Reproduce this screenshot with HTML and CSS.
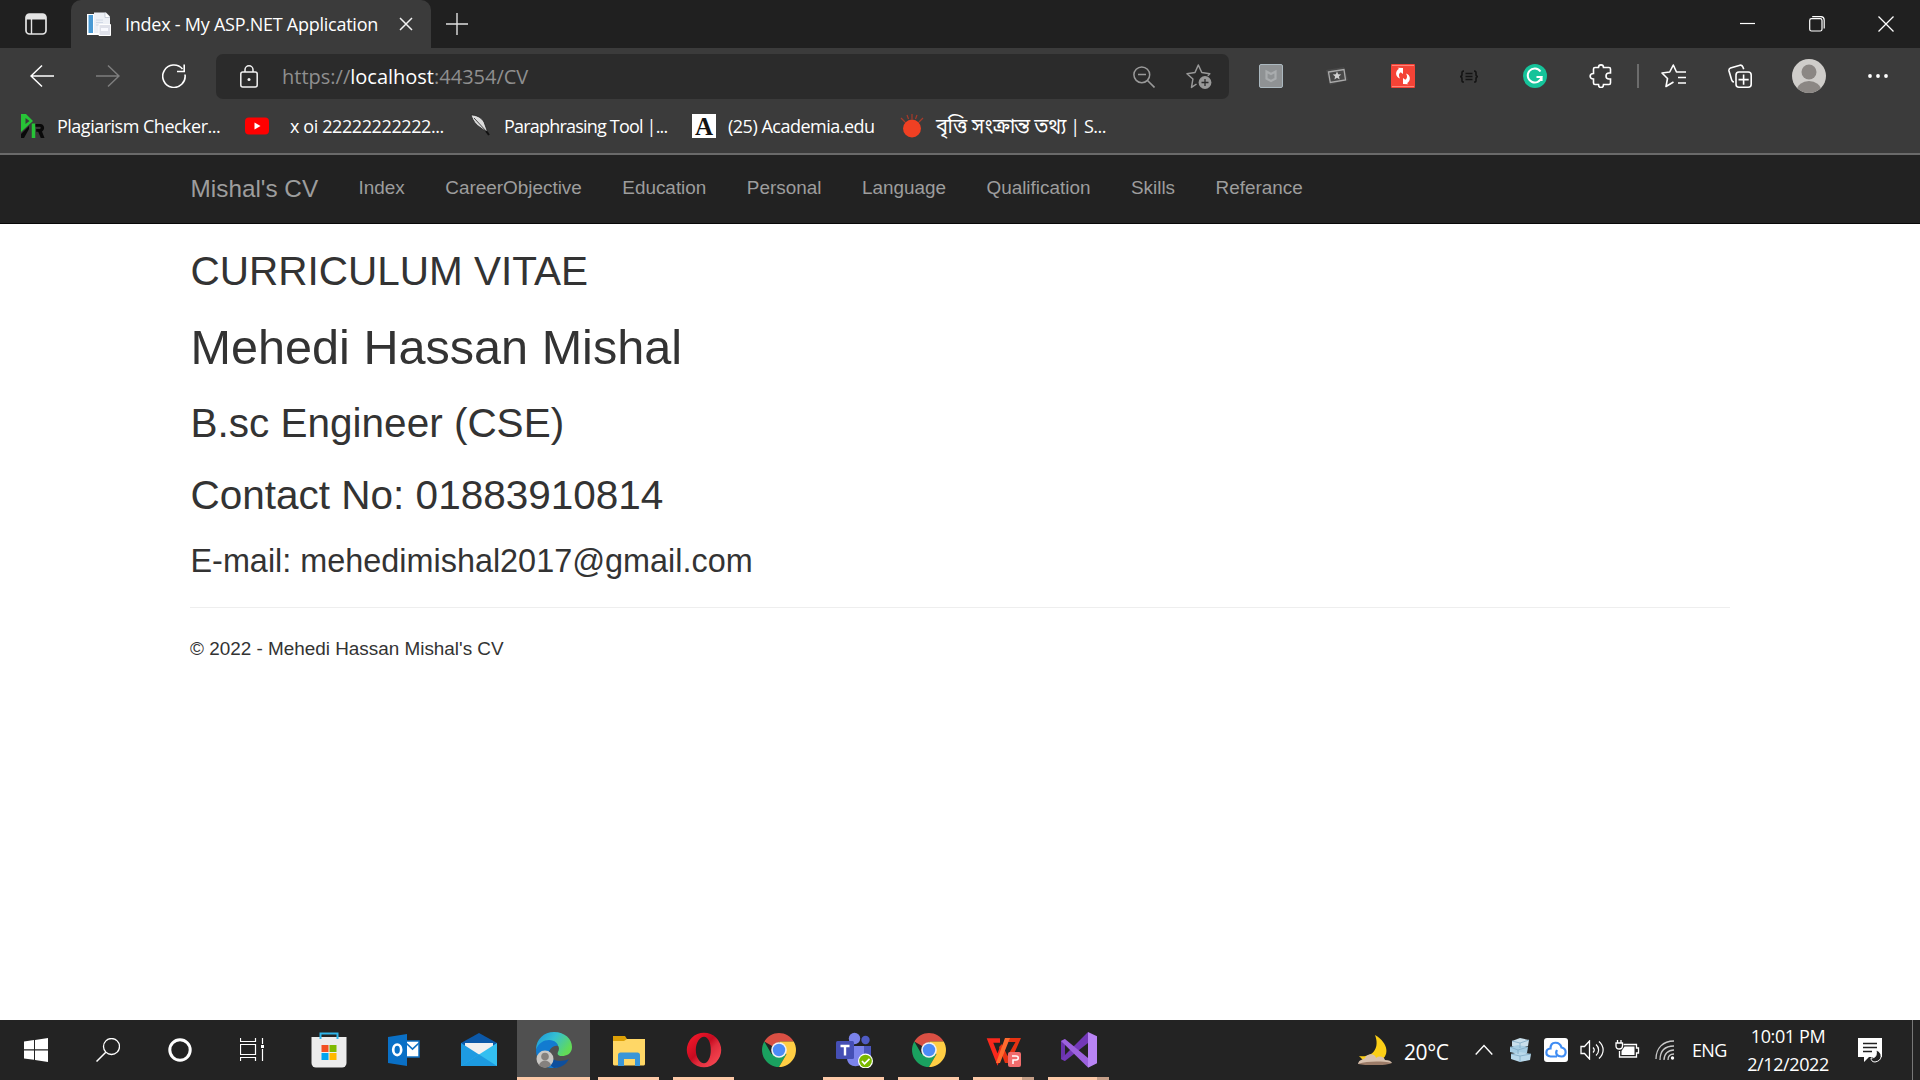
FILE: index.html
```html
<!DOCTYPE html>
<html lang="en">
<head>
<meta charset="utf-8">
<title>Index - My ASP.NET Application</title>
<link rel="stylesheet" href="styles.css">
</head>
<body>
<svg class="defs" width="0" height="0">
  <symbol id="chrome" viewBox="0 0 34 34">
    <path d="M17 17 2.3 8.5A17 17 0 0 1 31.7 8.5H17Z" fill="#d94f43"/>
    <path d="M2.3 8.5A17 17 0 0 0 17 34l7.4-12.8L17 17 9.6 21.2Z" fill="#1aa15f"/>
    <path d="M31.7 8.5A17 17 0 0 1 17 34l7.4-12.8L17 8.5Z" fill="#ffce44"/>
    <circle cx="17" cy="17" r="7.8" fill="#f1f1f1"/><circle cx="17" cy="17" r="6.2" fill="#4c8bf5"/>
  </symbol>
</svg>

<header class="browser">
  <div class="tabstrip">
    <svg class="tab-actions" width="22" height="22" viewBox="0 0 22 22"><rect x="1" y="1" width="20" height="20" rx="3.5" fill="none" stroke="#e4e4e4" stroke-width="1.7"/><path d="M1 6V4a3 3 0 0 1 3-3h14a3 3 0 0 1 3 3v2.5H1Z" fill="#e4e4e4"/><path d="M6.5 6v15" stroke="#e4e4e4" stroke-width="1.4"/></svg>
    <div class="tab">
      <svg width="24" height="24" viewBox="0 0 24 24"><path d="M0 2h13v21H0Z" fill="#fff"/><path d="M1.5 3h4.500v18h-4.500Z" fill="#4a9ad4"/><path d="M7 .5h12l4 4V21H7Z" fill="#edf0f6"/><path d="M18 .5v5h5" fill="#fff" stroke="#aab2c2" stroke-width=".6"/><path d="M9 8h7M9 10.500h7M9 13h3" stroke="#c9d3e2" stroke-width=".8"/><path d="M12 12.500h11.500V23.500H12Z" fill="#dfe1ea" stroke="#fff"/><path d="M14 16h7v3h-7Z" fill="#f9faff"/></svg>
      <span class="tab-title">Index - My ASP.NET Application</span>
      <svg class="tab-close" width="14" height="14" viewBox="0 0 14 14"><path d="m1 1 12 12M13 1 1 13" stroke="#f2f2f2" stroke-width="1.5"/></svg>
    </div>
    <svg class="tab-new" width="22" height="22" viewBox="0 0 22 22"><path d="M0 11h22M11 0v22" stroke="#e0e0e0" stroke-width="1.4"/></svg>
    <div class="window-controls">
      <svg width="16" height="16" viewBox="0 0 16 16"><path d="M0 7.500h15" stroke="#fff" stroke-width="1.2"/></svg>
      <svg width="16" height="16" viewBox="0 0 16 16"><rect x=".7" y="2.7" width="12.3" height="12.3" rx="1.8" fill="none" stroke="#fff" stroke-width="1.2"/><path d="M3.2.7H12a3.3 3.3 0 0 1 3.2 3.2v8.6" fill="none" stroke="#fff" stroke-width="1.2"/></svg>
      <svg width="16" height="16" viewBox="0 0 16 16"><path d="m.5.5 15 15M15.500.5l-15 15" stroke="#fff" stroke-width="1.3"/></svg>
    </div>
  </div>

  <div class="toolbar">
    <div class="nav-buttons">
      <svg width="24" height="24" viewBox="0 0 24 24"><path d="M24 12H1M12 1.500 1 12l11 10.500" fill="none" stroke="#fff" stroke-width="1.5"/></svg>
      <svg width="24" height="24" viewBox="0 0 24 24"><path d="M0 12h23M12 1.500 23 12 12 22.500" fill="none" stroke="#7e7e7e" stroke-width="1.5"/></svg>
      <svg width="24" height="24" viewBox="0 0 24 24"><path d="M23 10.500A11.200 11.200 0 1 1 20.500 5M22.200.5v7H15" fill="none" stroke="#fff" stroke-width="1.6"/></svg>
    </div>
    <div class="address">
      <svg class="lock" width="18" height="23" viewBox="0 0 18 23"><rect x=".8" y="7" width="16.400" height="15" rx="2" fill="none" stroke="#f2f2f2" stroke-width="1.5"/><path d="M5 7V4.800a4 4 0 0 1 8 0V7" fill="none" stroke="#f2f2f2" stroke-width="1.5"/><circle cx="9" cy="14.500" r="1.500" fill="#f2f2f2"/></svg>
      <span class="url">https://<b>localhost</b>:44354/CV</span>
      <svg class="zoom-out" width="22" height="22" viewBox="0 0 22 22"><circle cx="8.800" cy="8.800" r="7.900" fill="none" stroke="#999" stroke-width="1.500"/><path d="M5 8.500h8M14.500 14.500l7 7" stroke="#999" stroke-width="1.600"/></svg>
      <svg width="26" height="26" viewBox="0 0 26 26"><path d="m10.500 20-5 3.400L6.900 15 1 9.700l8-1.200L12.300 1l3.500 7.500 8 1.200-2 2" fill="none" stroke="#999" stroke-width="1.500" stroke-linejoin="round"/><circle cx="19" cy="18.500" r="6.400" fill="#999"/><path d="M15.500 18.500h7M19 15v7" stroke="#2b2b2b" stroke-width="1.300"/></svg>
    </div>
    <div class="extensions">
      <svg width="24" height="24" viewBox="0 0 24 24"><rect x=".5" y=".5" width="23" height="23" rx="1.500" fill="#8f9294" stroke="#abb8bf"/><path d="M7.500 7.500 12 10l4.500-2.500v7.200L12 17l-4.500-2.300Z" fill="none" stroke="#a9acae" stroke-width="2.200"/></svg>
      <svg width="24" height="24" viewBox="0 0 24 24"><path d="m1 6 18-3 4 13-18 5Z" fill="#484848"/><path d="m3.500 8 15.500-2.500 1.500 10.500L5.300 18.500Z" fill="none" stroke="#aaa" stroke-width="1.300"/><path d="m12 7.500 1.200 2.800 3 .2-2.300 2 .8 3-2.700-1.700-2.600 1.700.7-3-2.300-2 3-.2Z" fill="#d0d0d0"/></svg>
      <svg width="24" height="24" viewBox="0 0 24 24"><rect width="24" height="24" rx="1" fill="#f44336"/><path d="M1 1.500h22M1 22.500h22" stroke="#ff8378"/><path d="M12 4v6L9.700 8.300C7.500 9.500 7.500 12 9 14.500 4 13 4 7 8 4.800L6.500 3.700ZM12 20v-6l2.300 1.700c2.200-1.200 2.200-3.700.7-6.200 5 1.500 5 7.500 1 9.700l1.500 1.100Z" fill="#fff"/></svg>
      <svg width="24" height="24" viewBox="0 0 24 24"><path d="M7 7C4.500 7 5 9 5 10.500S4.500 12.500 3 12.500c1.500 0 2 .5 2 2.500S4.500 18 7 18M17 7c2.500 0 2 2 2 3.500s.5 2 2 2c-1.500 0-2 .5-2 2.500s.5 3-2 3M8.500 9.500h7M8.500 12.500h7M8.500 15.500h7" fill="none" stroke="#141414" stroke-width="1.600"/></svg>
      <svg width="24" height="24" viewBox="0 0 24 24"><circle cx="12" cy="12" r="12" fill="#15c39a"/><path d="M17.500 7.500A7 7 0 1 0 18.600 13H13.500M18.600 13v4" fill="none" stroke="#fff" stroke-width="2"/></svg>
      <svg width="24" height="24" viewBox="0 0 24 24"><path d="M6 3.500h3.500C9.500 0 14.500 0 14.500 3.500H20c1 0 1.500.5 1.500 1.500v4h-1.500c-4 0-4 6 0 6h1.500v4c0 1-.5 1.500-1.500 1.500h-5.500c0 4-5 4-5 0H6c-1 0-1.500-.5-1.500-1.500v-4C0 15 0 9.500 4.500 9.500V5c0-1 .5-1.500 1.500-1.500Z" fill="none" stroke="#fff" stroke-width="1.600"/></svg>
    </div>
    <span class="divider"></span>
    <div class="browser-actions">
      <svg width="26" height="24" viewBox="0 0 26 24"><path d="m12.500 18-7.500 4.500 1.500-8L1 9l7.700-1L12.300 1l3.200 7H25M17 13.500h8M17 19h8" fill="none" stroke="#fff" stroke-width="1.600" stroke-linejoin="round"/></svg>
      <svg width="24" height="24" viewBox="0 0 24 24"><path d="M6 18c-1.500 0-2-1-2.300-2L1 7c-.3-1.500.3-2.500 1.500-3l9.500-2.800c1.500-.3 2.500.5 3 2l.7 2" fill="none" stroke="#fff" stroke-width="1.600"/><rect x="8" y="8" width="15.200" height="15.200" rx="3" fill="none" stroke="#fff" stroke-width="1.600"/><path d="M10.500 15.600h10.200M15.600 10.500v10.200" stroke="#fff" stroke-width="1.600"/></svg>
      <svg class="avatar" width="34" height="34" viewBox="0 0 34 34"><clipPath id="face"><circle cx="17" cy="17" r="17"/></clipPath><g clip-path="url(#face)"><path d="M0 0h34v34H0Z" fill="#cfcdca"/><circle cx="17" cy="13" r="7.500" fill="#8b8784"/><ellipse cx="17" cy="31" rx="12" ry="9" fill="#8b8784"/></g></svg>
      <svg width="20" height="6" viewBox="0 0 20 6"><circle cx="2" cy="3" r="1.900" fill="#fff"/><circle cx="10" cy="3" r="1.900" fill="#fff"/><circle cx="18" cy="3" r="1.900" fill="#fff"/></svg>
    </div>
  </div>

  <div class="bookmarks">
    <a class="bm bm-plagiarism"><svg width="24" height="24" viewBox="0 0 24 24"><path d="M0 0h5l7 7-12 11Zm4.500 4v6l4-3Z" fill="#27c437" fill-rule="evenodd"/><path d="M12.500 9.500V24" stroke="#27c437" stroke-width="3.500"/><path d="M14.500 10H20c4 1 4 6 1 7.500l2.500 6.500h-3.700l-2.600-6.300h-2V15H19c1-.5 1-2 0-2.300h-4.500ZM0 24v-4l8-8v3l-5 9Z" fill="#090909"/></svg><span>Plagiarism Checker...</span></a>
    <a class="bm bm-youtube"><svg width="24" height="24" viewBox="0 0 24 24"><rect y="3.500" width="24" height="17" rx="4" fill="#f00"/><path d="m9.500 8.500 6 3.500-6 3.500Z" fill="#fff"/></svg><span>x oi 22222222222...</span></a>
    <a class="bm bm-paraphrase"><svg width="24" height="24" viewBox="0 0 24 24"><path d="M1 1c5 0 10 2 13 7l4 11-7-5C6 11 3 7 1 1Z" fill="#ddd" stroke="#222" stroke-width=".8"/><path d="m4 4 13 14" stroke="#444"/><path d="m16 17 3 4" stroke="#111" stroke-width="2"/></svg><span>Paraphrasing Tool |...</span></a>
    <a class="bm bm-academia"><i class="academia">A</i><span>(25) Academia.edu</span></a>
    <a class="bm bm-bangla"><svg width="24" height="24" viewBox="0 0 24 24"><ellipse cx="12" cy="14.500" rx="9" ry="9" fill="#f04023"/><path d="M12 0v5M7 1l1.500 4M17 1l-1.500 4M1 4l4 4M23 4l-4 4" stroke="#a83a29" stroke-width="1.200"/></svg><span><span class="bangla" lang="bn">বৃত্তি সংক্রান্ত তথ্য</span> | S...</span></a>
  </div>
</header>

<main class="page">
  <nav class="navbar">
    <div class="container nav-row">
      <a class="brand">Mishal's CV</a>
      <a>Index</a><a>CareerObjective</a><a>Education</a><a>Personal</a><a>Language</a><a>Qualification</a><a>Skills</a><a>Referance</a>
    </div>
  </nav>
  <div class="container content">
    <h2>CURRICULUM VITAE</h2>
    <h1>Mehedi Hassan Mishal</h1>
    <h2>B.sc Engineer (CSE)</h2>
    <h2>Contact No: 01883910814</h2>
    <h3>E-mail: mehedimishal2017@gmail.com</h3>
    <hr>
    <footer>© 2022 - Mehedi Hassan Mishal's CV</footer>
  </div>
</main>

<div class="taskbar">
  <div class="system-icons">
    <svg width="24" height="24" viewBox="0 0 24 24"><path d="m0 3.500 10-1.400v9.200H0ZM11 2l13-2v11.300H11ZM0 12.500h10v9.300L0 20.400ZM11 12.500h13V24l-13-2Z" fill="#fff"/></svg>
    <svg width="24" height="24" viewBox="0 0 24 24"><circle cx="15.500" cy="8.500" r="8" fill="none" stroke="#fff" stroke-width="1.300"/><path d="M9.800 14.200.5 23.500" stroke="#fff" stroke-width="1.500"/></svg>
    <svg width="24" height="24" viewBox="0 0 24 24"><circle cx="12" cy="12" r="10.200" fill="none" stroke="#fff" stroke-width="3"/></svg>
    <svg width="24" height="24" viewBox="0 0 24 24"><path d="M.5 0v3.500h15V0M.5 6.500h15v10H.5ZM.5 23v-3.500h15V23M22.500 0v6M22.500 11v12" fill="none" stroke="#fff" stroke-width="1.200"/><path d="M21 7h3v3h-3Z" fill="#fff"/></svg>
  </div>
  <div class="apps">
    <span class="app"><svg width="36" height="36" viewBox="0 0 36 36"><path d="M.5 5h35v26a4.500 4.500 0 0 1-4.500 4.500H5A4.500 4.500 0 0 1 .5 31Z" fill="#ececec"/><path d="M9.500 7V1.500h17V7" fill="none" stroke="#2fb5ea" stroke-width="2"/><path d="M10.500 13h7v7h-7Z" fill="#f25022"/><path d="M18.500 13h7v7h-7Z" fill="#7fba00"/><path d="M10.500 21h7v7h-7Z" fill="#00a4ef"/><path d="M18.500 21h7v7h-7Z" fill="#ffb900"/></svg></span>
    <span class="app"><svg width="36" height="36" viewBox="0 0 36 36"><path d="M19 9h14v16H19Z" fill="#fff" stroke="#1072c4" stroke-width="1.500"/><path d="m20 11 6.500 6L33 11" fill="none" stroke="#1072c4" stroke-width="1.700"/><path d="m2 5 19-3v32L2 31Z" fill="#0a70c6"/><ellipse cx="11.200" cy="17.800" rx="4" ry="5.300" fill="none" stroke="#fff" stroke-width="2.700"/></svg></span>
    <span class="app"><svg width="36" height="36" viewBox="0 0 36 36"><path d="M0 11 18 1l18 10v6H0Z" fill="#0b58a8"/><path d="M4 11h28v14H4Z" fill="#f0f0f0"/><path d="M0 11 36 34H0Z" fill="#1e9be2"/><path d="M36 11v23H0Z" fill="#33bff0"/><path d="m18 22.500 18 11.500H0Z" fill="#1c9ae0"/></svg></span>
    <span class="app active wide"><svg width="36" height="36" viewBox="0 0 36 36"><defs><linearGradient id="eg" x2="1" y2=".5"><stop stop-color="#1793dc"/><stop offset=".5" stop-color="#35bfd2"/><stop offset="1" stop-color="#62db57"/></linearGradient></defs><path d="M0 18C0 7 8 0 18 0c11 0 18 7 18 15 0 7-6 9-10 9-4 0-5-2-4-4 3-5-1-10-8-10C7 10 2 14 0 18Z" fill="url(#eg)"/><path d="M0 18C2 11 8 8 13 8c6 0 9 4 9 6-5-1-9 3-9 8 0 6 4 12 9 14C8 38 0 29 0 18Z" fill="#127bd0"/><path d="M14 18c-2 9 7 14 19 9-3 6-9 9-15 9-6-3-9-12-4-18Z" fill="#0d4f9d"/><circle cx="9" cy="27" r="8.500" fill="#c9c7c4"/><circle cx="9" cy="24.500" r="3.800" fill="#85817e"/><path d="M3 33c2-6 10-6 12 0-3 3.500-9 3.500-12 0Z" fill="#85817e"/></svg></span>
    <span class="app open"><svg width="34" height="34" viewBox="0 0 34 34"><path d="M1 3h12l2 3v6H1Z" fill="#dda006"/><path d="M1 8h11l3-2h18v25c0 1-1 1.500-2 1.500H3c-1 0-2-.5-2-1.500Z" fill="#ffd766"/><path d="M6 33V22c0-1.500 1-2.500 2.500-2.500h17c1.500 0 2.500 1 2.500 2.500v11h-5v-7H12v7Z" fill="#3a96d8"/></svg></span>
    <span class="app open"><svg width="36" height="36" viewBox="0 0 36 36"><defs><linearGradient id="og" x2="1" y2="1"><stop stop-color="#ff1b2d"/><stop offset=".45" stop-color="#c60b20"/><stop offset=".6" stop-color="#e02c3c"/><stop offset="1" stop-color="#ff5058"/></linearGradient></defs><path fill-rule="evenodd" d="M18 .8a17.200 17.200 0 1 0 0 34.400 17.200 17.200 0 1 0 0-34.400Zm0 4c4 0 6.800 5.800 6.800 13.200S22 31.200 18 31.200 9.800 25.400 9.800 18 14 4.800 18 4.800Z" fill="url(#og)"/></svg></span>
    <span class="app"><svg width="34" height="34"><use href="#chrome"/></svg></span>
    <span class="app open"><svg width="38" height="36" viewBox="0 0 38 36"><circle cx="30.500" cy="8" r="4.200" fill="#4f5bc4"/><path d="M25 14h11v13c0 3-4 5-8 3Z" fill="#4c57be"/><circle cx="19.500" cy="6.500" r="5.700" fill="#7b83eb"/><path d="M12 14h17v12c0 11-17 11-17 0Z" fill="#7b83eb"/><rect x="1" y="9" width="18" height="18" rx="1.500" fill="#454fb5"/><path d="M5.500 14h9M10 14v9.500" stroke="#fff" stroke-width="2.400"/><circle cx="30.500" cy="29" r="7.500" fill="#fff"/><circle cx="30.500" cy="29" r="6.300" fill="#7ab800"/><path d="m27 29 2.500 2.800 5-5" fill="none" stroke="#fff" stroke-width="1.700"/></svg></span>
    <span class="app open"><svg width="34" height="34"><use href="#chrome"/></svg></span>
    <span class="app open grouped"><svg width="36" height="36" viewBox="0 0 36 36"><path d="M14 8.500H4l7.500 19L16 16" fill="none" stroke="#f9281c" stroke-width="4.500"/><path d="M23 6h12L24 31h-5L13 15l3-3 5.500 12L29.500 10H22Z" fill="#e63212"/><path d="M19 6h5L14 31h-4Z" fill="#ff6a2e"/><rect x="22" y="20" width="13" height="15" rx="2" fill="#f16c6c"/><path d="M26 24h4c3 0 3 4 0 4h-3v4" fill="none" stroke="#fff" stroke-width="1.500"/></svg></span>
    <span class="app open grouped"><svg width="36" height="36" viewBox="0 0 36 36"><path d="M0 9v18l4 2V7Z" fill="#6a32ad"/><path d="m0 27 4 2L27 11V0Z" fill="#7338b8"/><path d="m4 7 23 19v9.500L0 9Z" fill="#9d62de"/><path d="m27 0 9 4.300v27L27 35.700Z" fill="#b984f5"/></svg></span>
  </div>
  <div class="tray">
    <svg class="weather" width="36" height="30" viewBox="0 0 36 30"><path d="M18 0c14 8 15 22 4 26H7L2 21C16 23 23 13 18 0Z" fill="#fccf17"/><path d="M1 29c1-5 5-4 7-6 2-5 10-5 11 0 4-3 8-1 9 2 4 0 6 1 7 3Z" fill="#d8c1ae"/><path d="M1 29c10-3 23-3 34-1-8 3-24 3-34 1Z" fill="#9c7c68"/></svg>
    <span class="temp">20°C</span>
    <svg class="chevron" width="18" height="12" viewBox="0 0 18 12"><path d="m.7 10.500 8.300-9 8.300 9" fill="none" stroke="#fff" stroke-width="1.400"/></svg>
    <svg class="cubes" width="22" height="24" viewBox="0 0 22 24"><path d="m3 3 8-3 9 2-1 6-8 2-8-2Z" fill="#c9dfeb"/><path d="m1 9 8-2 10 2-1 6-9 1-8-2Z" fill="#a6cde3"/><path d="m2 16 9-2 11 2-1 6-10 2-9-3Z" fill="#b9d9eb"/><path d="m3 3 8 2 9-3M11 5v5M1 9l8 3 10-3M9 12v4M2 16l9 2 11-2M11 18v6" fill="none" stroke="#7fa9c4" stroke-width=".8"/></svg>
    <svg class="cloud" width="24" height="24" viewBox="0 0 24 24"><rect width="24" height="24" rx="3" fill="#fff"/><path d="M13 18.500H6.500c-5.500-.5-5.500-7.500 0-8C6.500 3 15.500 3 17.500 9.500c5.500 1 5.500 8.500 0 9-4.500 0-6.500-3-4.500-6.500" fill="none" stroke="#3f8cf3" stroke-width="2.200"/></svg>
    <svg class="speaker" width="24" height="20" viewBox="0 0 24 20"><path d="M1 6.500h3.500L9.500 1v18l-5-5.500H1Z" fill="none" stroke="#fff" stroke-width="1.300"/><path d="M13 7.500c1.500 1.500 1.500 3.500 0 5M16 4.500c3.500 3 3.500 8 0 11M19 1.500c5.500 5 5.500 12 0 17" fill="none" stroke="#fff" stroke-width="1.200"/></svg>
    <svg class="battery" width="25" height="20" viewBox="0 0 25 20"><path d="M8.500 4.500H21.500v3.500H23.500v5H21.500v4H4.500V11" fill="none" stroke="#fff" stroke-width="1.300"/><path d="M9.500 6.500h10v8.500h-13v-4Z" fill="#fff"/><path d="M2.500 0v3M6 0v3M1 3h6.500v3c0 2-1 3-3.200 3S1 8 1 6Z" fill="none" stroke="#fff" stroke-width="1.300"/></svg>
    <svg class="wifi" width="20" height="20" viewBox="0 0 20 20"><path d="M1 19C1 8 8 1 19 1M5 20C5 11 10 6 19 6M9 20c0-6 4-10 10-10M13 20c0-4 2-6 6-6" fill="none" stroke="#c9c9c9" stroke-width="1.300"/><circle cx="17.500" cy="18" r="1.700" fill="#fff"/></svg>
    <span class="lang">ENG</span>
    <div class="clock"><span>10:01 PM</span><span>2/12/2022</span></div>
    <svg class="notice" width="24" height="25" viewBox="0 0 24 25"><path d="M0 0h24v19H11l-5 5v-5H0Z" fill="#fff"/><path d="M5 5.500h14M5 9.500h14M5 13.500h9" stroke="#222" stroke-width="1.300"/><path d="M18 12c7 2 7 11-1 12-3 0-4-2-4-4 5 0 6-3 5-8Z" fill="#222" stroke="#fff" stroke-width="1"/></svg>
  </div>
</div>
</body>
</html>
```
FILE: styles.css
```css
* { box-sizing: border-box; }
body { margin: 0; width: 1920px; height: 1080px; display: flex; flex-direction: column; overflow: hidden; background: #fff; font-family: "Open Sans", "Noto Sans", "Noto Sans Bengali", sans-serif; }
svg { display: block; flex: none; }
.defs { position: absolute; }

/* Browser frame */
.browser { height: 155px; flex: none; background: #3b3b3b; border-bottom: 2px solid #6a6a6a; color: #fff; }
.tabstrip { height: 48px; background: #202020; display: flex; align-items: center; padding-left: 25px; }
.tab { width: 360px; height: 48px; margin-left: 24px; padding: 0 18px 0 16px; border-radius: 10px 10px 0 0; background: #3b3b3b; display: flex; align-items: center; }
.tab-title { margin-left: 14px; width: 260px; font-size: 18px; letter-spacing: -.25px; white-space: nowrap; padding-bottom: 1px; }
.tab-close { margin-left: 14px; }
.tab-new { margin-left: 15px; }
.window-controls { margin-left: auto; margin-right: 26px; display: flex; gap: 53px; }

.toolbar { height: 56px; padding-top: 6px; display: flex; align-items: flex-start; }
.nav-buttons { height: 44px; width: 186px; padding-left: 30px; display: flex; align-items: center; gap: 42px; }
.address { width: 1013px; height: 45px; margin-left: 30px; padding: 0 17px 0 24px; border-radius: 7px; background: #2b2b2b; display: flex; align-items: center; }
.lock { margin-bottom: 1px; }
.url { margin-left: 24px; flex: 1; font-size: 20px; color: #8f8f8f; }
.url b { font-weight: 400; color: #fff; }
.zoom-out { margin-right: 31px; }
.extensions { height: 44px; margin-left: 30px; display: flex; align-items: center; gap: 42px; }
.divider { width: 2px; height: 24px; margin: 10px 0 0 24px; background: #6c6c6c; }
.browser-actions { height: 44px; margin-left: 22px; display: flex; align-items: center; gap: 41px; }
.avatar { margin: 0 1px 0 -1px; }

.bookmarks { height: 43px; padding-left: 21px; display: flex; align-items: center; font-size: 18px; letter-spacing: -.5px; }
.bm { display: flex; align-items: center; gap: 12px; white-space: nowrap; }
.bm-plagiarism { width: 224px; }
.bm-youtube { width: 225px; gap: 21px; letter-spacing: -.4px; }
.bm-paraphrase { width: 222px; gap: 10px; letter-spacing: -.8px; }
.bm-academia { width: 208px; }
.bangla { font-size: 20px; line-height: 24px; letter-spacing: -.3px; }
.academia { width: 24px; height: 24px; background: #fff; color: #111; font: bold 25px/25px "Liberation Serif", serif; letter-spacing: 0; text-align: center; }

/* Web page */
.page { flex: 1; font-family: "Liberation Sans", Arial, sans-serif; font-size: 18.9px; line-height: 27px; color: #333; }
.container { width: 1540px; margin: 0 auto; }
.navbar { height: 69px; background: #222; border-bottom: 1px solid #080808; color: #9d9d9d; }
.nav-row { display: flex; padding: 19px 0 0 .6px; gap: 40.5px; }
.brand { font-size: 24.3px; padding-top: 1px; }
.content { padding-top: 25px; }
h1, h2, h3 { font-weight: 500; line-height: 1.1; margin: 0 0 27px; padding-left: .5px; }
h1 { font-size: 48.6px; }
h2 { font-size: 40.5px; }
h3 { font-size: 32.4px; }
hr { margin: 0 0 27px; border: 0; border-top: 1px solid #eee; }

/* Taskbar */
.taskbar { height: 60px; flex: none; background: #232323; display: flex; color: #fff; }
.system-icons { display: flex; align-items: center; gap: 48px; padding-left: 24px; width: 291px; }
.apps { display: flex; }
.app { width: 61px; margin: 0 7px; height: 60px; display: flex; align-items: center; justify-content: center; border-bottom: 3px solid transparent; padding-top: 3px; }
.open, .active { border-bottom-color: #fcc9a8; }
.wide { width: 73px; margin: 0 1px; }
.active { background: #505050; }
.grouped { border-image: linear-gradient(90deg, #fcc9a8 47px, #c59f88 47px) 3; }
.tray { margin-left: auto; width: 563px; display: flex; align-items: center; font-size: 18px; letter-spacing: -.4px; }
.temp { margin-left: 11px; width: 71px; font-size: 21px; padding-top: 3px; }
.cubes { margin-left: 16px; }
.cloud { margin-left: 13px; }
.speaker { margin-left: 12px; }
.battery { margin-left: 11px; }
.wifi { margin-left: 15px; }
.lang { margin-left: 17px; width: 51px; letter-spacing: -.7px; }
.clock { width: 90px; display: flex; flex-direction: column; align-items: center; line-height: 28px; }
.notice { margin-left: 25px; }
.tray::after { content: ""; width: 1px; height: 60px; margin-left: 30px; background: #777; }
```
